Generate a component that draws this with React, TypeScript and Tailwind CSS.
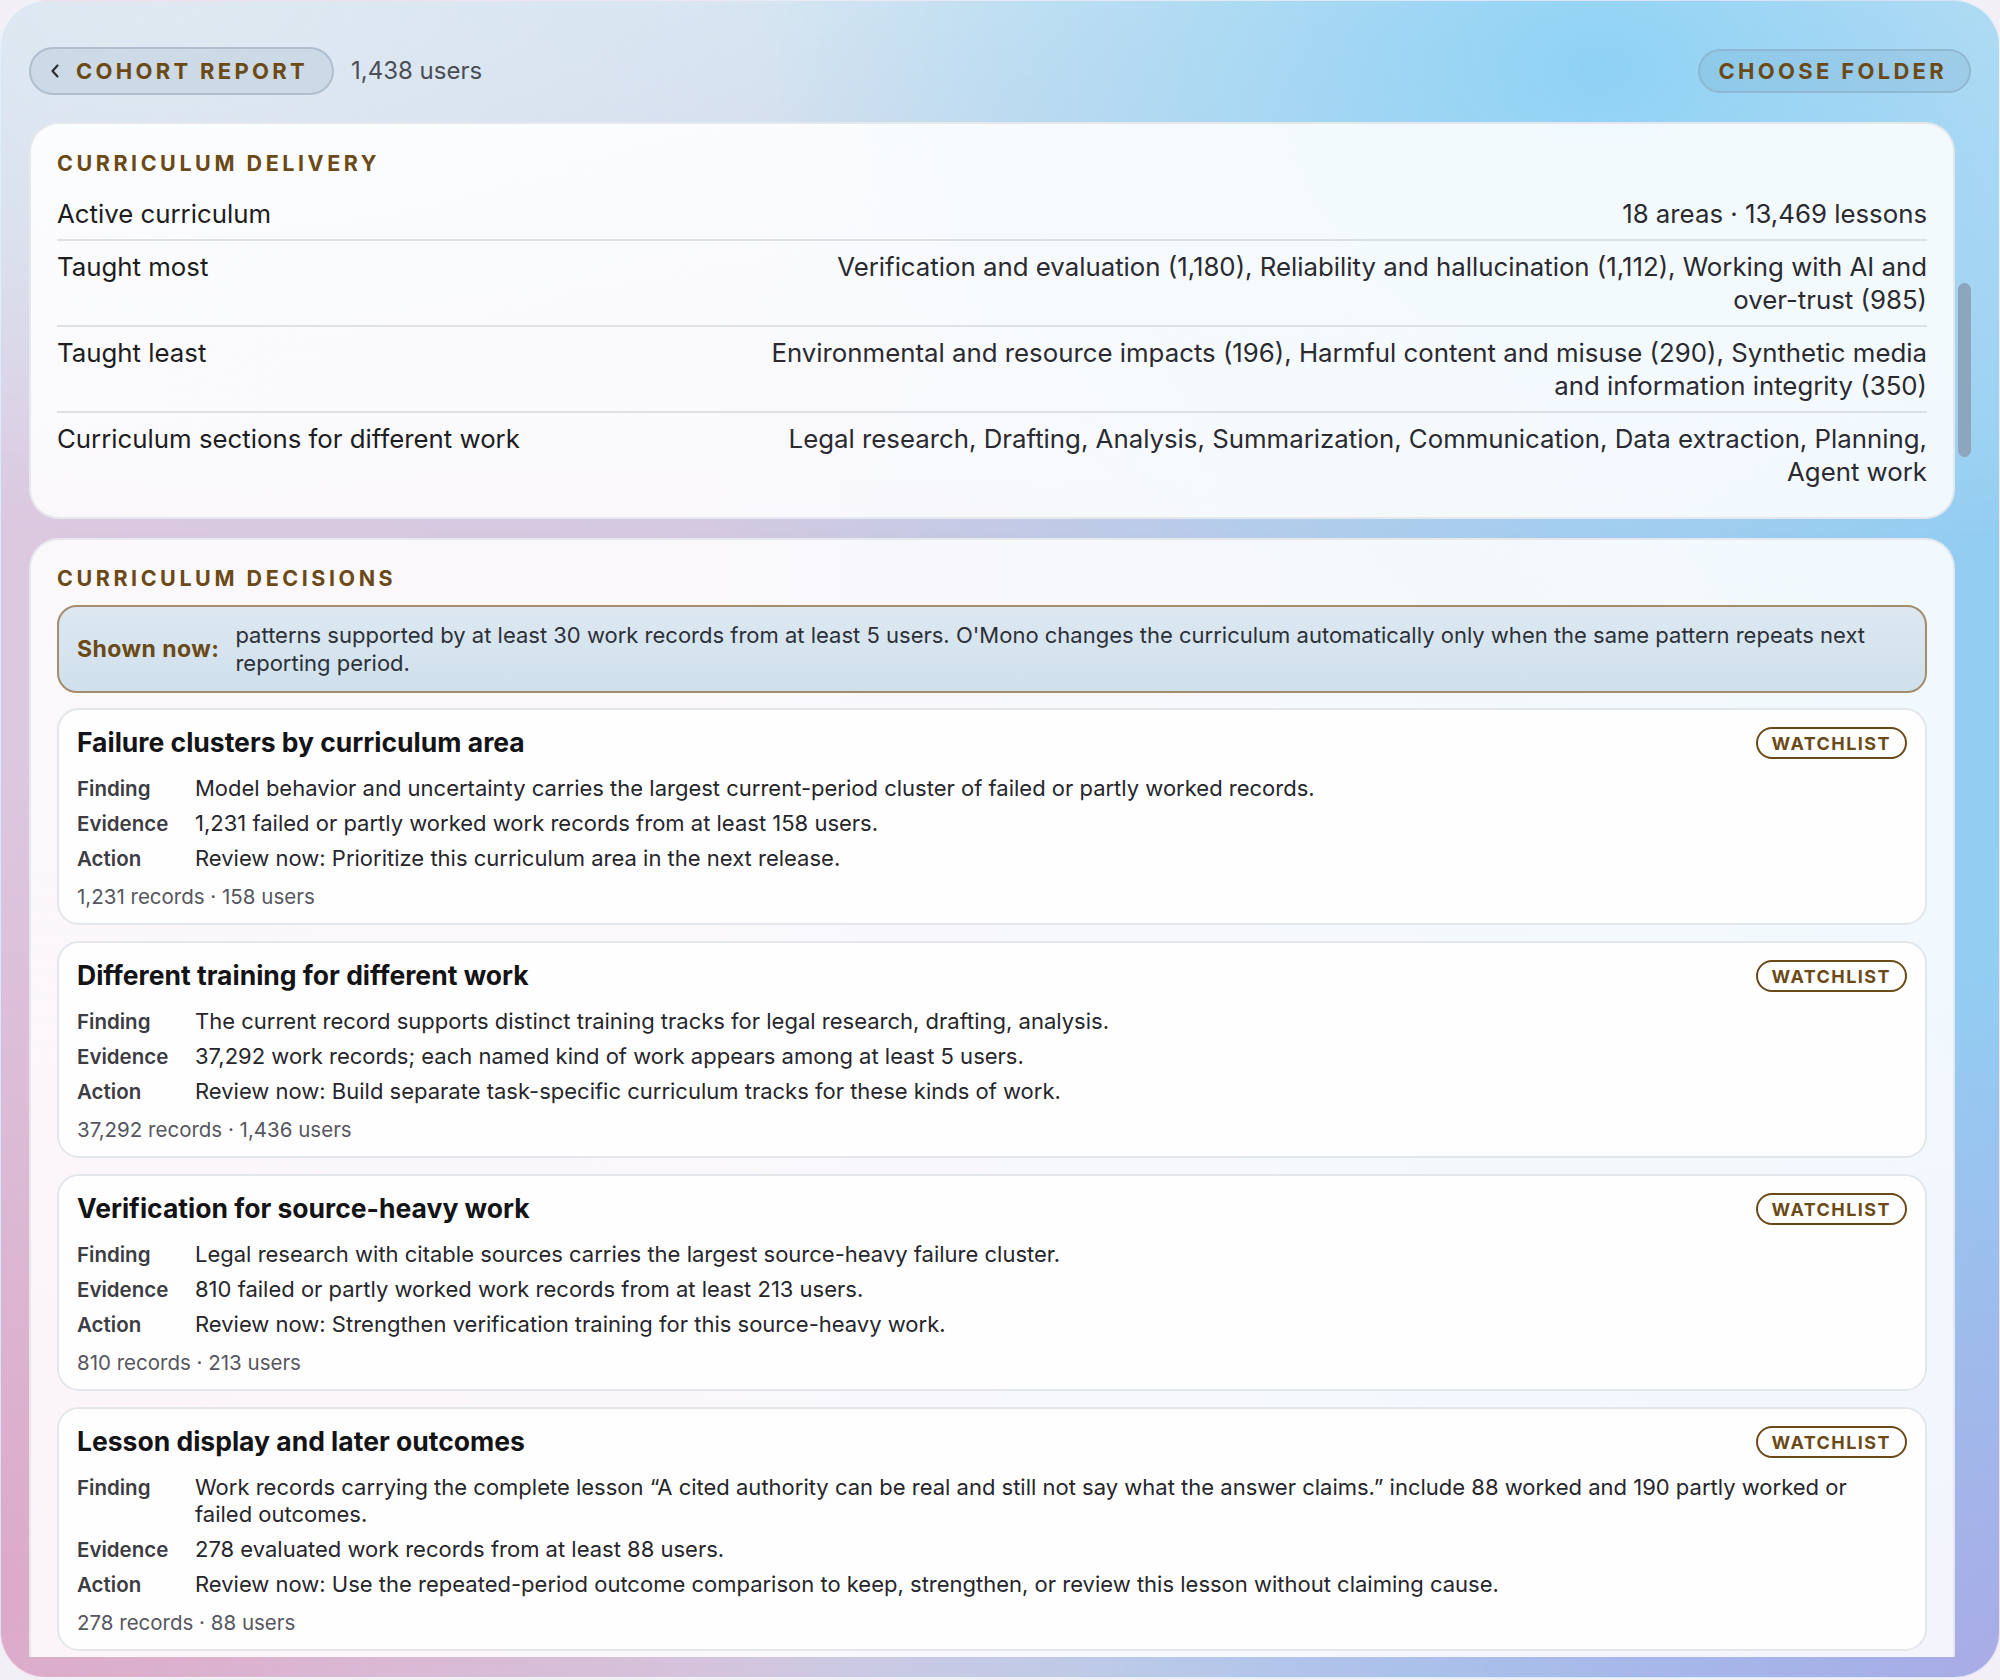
import React from "react";

const deliveryRows: { label: string; value: React.ReactNode }[] = [
  { label: "Active curriculum", value: "18 areas · 13,469 lessons" },
  {
    label: "Taught most",
    value: (
      <>
        Verification and evaluation (1,180), Reliability and hallucination (1,112), Working with AI and{" "}
        <span className="whitespace-nowrap">over-trust</span> (985)
      </>
    ),
  },
  {
    label: "Taught least",
    value:
      "Environmental and resource impacts (196), Harmful content and misuse (290), Synthetic media and information integrity (350)",
  },
  {
    label: "Curriculum sections for different work",
    value:
      "Legal research, Drafting, Analysis, Summarization, Communication, Data extraction, Planning, Agent work",
  },
];

const decisions = [
  {
    title: "Failure clusters by curriculum area",
    finding:
      "Model behavior and uncertainty carries the largest current-period cluster of failed or partly worked records.",
    evidence: "1,231 failed or partly worked work records from at least 158 users.",
    action: "Review now: Prioritize this curriculum area in the next release.",
    footer: "1,231 records · 158 users",
  },
  {
    title: "Different training for different work",
    finding:
      "The current record supports distinct training tracks for legal research, drafting, analysis.",
    evidence: "37,292 work records; each named kind of work appears among at least 5 users.",
    action: "Review now: Build separate task-specific curriculum tracks for these kinds of work.",
    footer: "37,292 records · 1,436 users",
  },
  {
    title: "Verification for source-heavy work",
    finding:
      "Legal research with citable sources carries the largest source-heavy failure cluster.",
    evidence: "810 failed or partly worked work records from at least 213 users.",
    action: "Review now: Strengthen verification training for this source-heavy work.",
    footer: "810 records · 213 users",
  },
  {
    title: "Lesson display and later outcomes",
    finding:
      "Work records carrying the complete lesson \u201CA cited authority can be real and still not say what the answer claims.\u201D include 88 worked and 190 partly worked or failed outcomes.",
    evidence: "278 evaluated work records from at least 88 users.",
    action:
      "Review now: Use the repeated-period outcome comparison to keep, strengthen, or review this lesson without claiming cause.",
    footer: "278 records · 88 users",
  },
];

function DecisionCard({ d }: { d: (typeof decisions)[number] }) {
  return (
    <div className="rounded-[22px] border-2 border-[#e3e6ea] bg-white/[0.9] px-[18px] pt-[17px] pb-[13px]">
      <div className="flex items-start justify-between">
        <h3 className="text-[26.5px] leading-[30px] font-bold text-[#141417]">{d.title}</h3>
        <span className="flex h-[32px] items-center rounded-full border-2 border-[#6b4a17] px-[14px] text-[18px] font-bold tracking-[0.08em] text-[#6b4a17]">
          WATCHLIST
        </span>
      </div>
      <div className="mt-[16px] grid grid-cols-[118px_1fr] gap-y-[8px] text-[22px] leading-[27px]">
        <div className="text-[20.5px] font-semibold text-[#3c3c43]">Finding</div>
        <div className="text-[#26262b]">{d.finding}</div>
        <div className="text-[20.5px] font-semibold text-[#3c3c43]">Evidence</div>
        <div className="text-[#26262b]">{d.evidence}</div>
        <div className="text-[20.5px] font-semibold text-[#3c3c43]">Action</div>
        <div className="text-[#26262b]">{d.action}</div>
      </div>
      <div className="mt-[12px] text-[20.5px] leading-[26px] text-[#56565e]">{d.footer}</div>
    </div>
  );
}

export default function App() {
  return (
    <div className="h-[1680px] w-[2000px] bg-[#f2eff6] font-['Inter',sans-serif]">
      <div className="relative h-[1678px] w-[2000px] overflow-hidden rounded-[46px] border border-white/60 bg-[radial-gradient(ellipse_42%_32%_at_80%_4%,#8fd2f5_0%,transparent_100%),radial-gradient(ellipse_42%_30%_at_8%_0%,#dfe9f2_0%,transparent_100%),radial-gradient(ellipse_45%_42%_at_100%_100%,#a9abe6_0%,transparent_100%),radial-gradient(ellipse_42%_50%_at_0%_95%,#dcaac9_0%,transparent_100%),linear-gradient(180deg,#d3e4f1_0%,rgba(211,228,241,0)_32%),linear-gradient(90deg,#dcc8df_0%,#d4c8e0_35%,#b8cbea_60%,#92cdf2_100%)]">
        {/* Header */}
        <div className="mt-[46px] flex h-[48px] items-center justify-between px-[28px]">
          <div className="flex items-center gap-[17px]">
            <button className="flex h-[48px] items-center gap-[16px] rounded-full border-2 border-[#a7b9c9]/80 bg-[#6a86a0]/[0.14] pl-[19px] pr-[24px]">
              <svg width="10" height="16" viewBox="0 0 10 16" fill="none">
                <path d="M7.5 2.5 L2.5 8 L7.5 13.5" stroke="#2d2f33" strokeWidth="2.2" strokeLinecap="round" strokeLinejoin="round" />
              </svg>
              <span className="text-[22px] font-bold tracking-[0.15em] text-[#6b4a17]">COHORT REPORT</span>
            </button>
            <span className="text-[24px] text-[#4a4e57]">1,438 users</span>
          </div>
          <button className="flex h-[44px] items-center rounded-full border-2 border-[#8fb3cc]/80 bg-[#5b86a8]/[0.14] pl-[19px] pr-[22px]">
            <span className="text-[22px] font-bold tracking-[0.15em] text-[#6b4a17]">CHOOSE FOLDER</span>
          </button>
        </div>

        {/* Scroll area */}
        <div className="relative mx-[28px] mt-[27px] h-[1535px] overflow-hidden pr-[16px]">
          <div className="absolute right-0 top-[161px] h-[174px] w-[13px] rounded-full bg-[#8ea6bd]" />

          {/* Curriculum delivery */}
          <section className="rounded-[30px] border-2 border-[#e2e6eb]/90 bg-white/[0.87] px-[26px] pt-[25px] pb-[20px]">
            <h2 className="text-[21.5px] leading-[28px] font-bold tracking-[0.165em] text-[#6b4a17]">CURRICULUM DELIVERY</h2>
            <div className="mt-[11px] divide-y-2 divide-[#dde1e6]">
              {deliveryRows.map((r) => (
                <div key={r.label} className="flex justify-between gap-[24px] py-[9px] text-[25.8px] leading-[33px]">
                  <div className="whitespace-nowrap text-[#1d1d21]">{r.label}</div>
                  <div className="max-w-[1170px] text-right text-[#2a2a30]">{r.value}</div>
                </div>
              ))}
            </div>
          </section>

          {/* Curriculum decisions */}
          <section className="mt-[19px] rounded-[30px] border-2 border-[#e2e6eb]/90 bg-white/[0.87] px-[26px] pt-[24px] pb-[30px]">
            <h2 className="text-[21.5px] leading-[28px] font-bold tracking-[0.165em] text-[#6b4a17]">CURRICULUM DECISIONS</h2>
            <div className="mt-[13px] flex items-center gap-[16px] rounded-[20px] border-2 border-[#a38d6c] bg-[linear-gradient(180deg,#dde8f1_0%,#cfe0ec_100%)] py-[14px] pl-[18px] pr-[20px]">
              <div className="shrink-0 text-[23px] font-bold tracking-[0.02em] text-[#6b4a17]">Shown now:</div>
              <div className="text-[22px] leading-[28px] text-[#2c3038]">
                patterns supported by at least 30 work records from at least 5 users. O'Mono changes the curriculum automatically only when the same pattern repeats next reporting period.
              </div>
            </div>
            <div className="mt-[15px] flex flex-col gap-[16px]">
              {decisions.map((d) => (
                <DecisionCard key={d.title} d={d} />
              ))}
            </div>
          </section>
        </div>
      </div>
    </div>
  );
}
